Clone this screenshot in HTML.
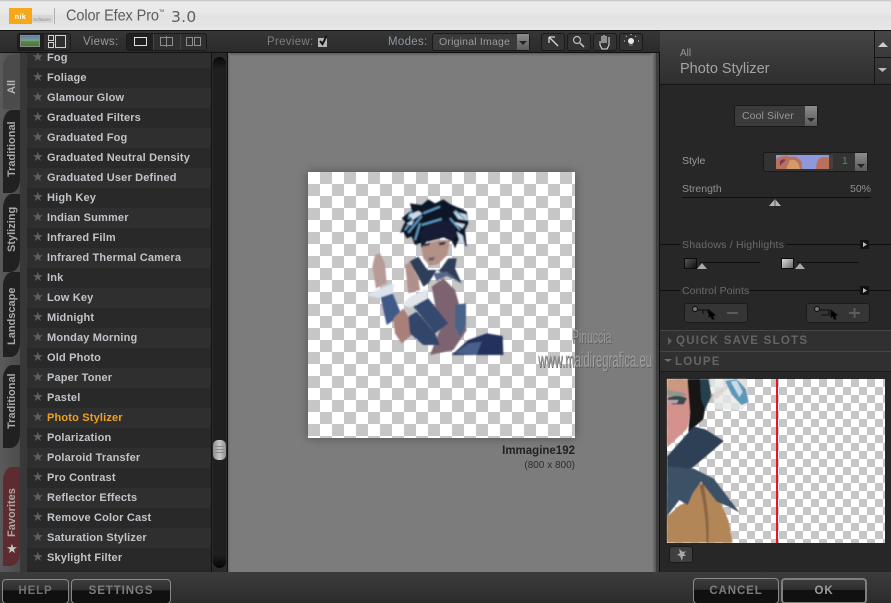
<!DOCTYPE html>
<html><head><meta charset="utf-8"><style>
html,body{margin:0;padding:0;background:#2a2a2a}
#p{position:relative;width:891px;height:603px;overflow:hidden;background:#2a2a2a;font-family:"Liberation Sans",sans-serif}
#p div,#p span.a{position:absolute}
.row{left:27px;width:184px;height:20px}
.row b{position:absolute;left:20px;top:3px;font:bold 11px/14px "Liberation Sans",sans-serif;color:#c0c4c8;white-space:nowrap;letter-spacing:.17px}
.row i{position:absolute;left:5px;top:2px;font:normal 13px/16px "DejaVu Sans",sans-serif;color:#5f5f5f}
.tab{left:3px;width:17px;border-radius:9px 0 9px 0/14px 0 14px 0;background:#212121}
.tl{left:4px;width:17px;font:bold 11px/17px "Liberation Sans",sans-serif;color:#a9a9a9;writing-mode:vertical-rl;transform:rotate(180deg);text-align:center}
.btn{border:1px solid #8a8a8a;border-radius:4px;background:linear-gradient(#3d3d3d 0,#2e2e2e 44%,#0f0f0f 46%,#111 100%);text-align:center;font:bold 11.5px/23px "Liberation Sans",sans-serif;color:#7f7f7f;letter-spacing:.9px;box-sizing:border-box;height:25px}
.t{white-space:nowrap}
.chk{background-color:#fff;background-image:linear-gradient(45deg,#c6c6c6 25%,transparent 25%,transparent 75%,#c6c6c6 75%),linear-gradient(45deg,#c6c6c6 25%,transparent 25%,transparent 75%,#c6c6c6 75%)}
.tb{background:#2f2f2f;border:1px solid #1a1a1a;border-radius:3px;box-sizing:border-box}
.dd{background:#3a3a3a;border-radius:3px;border:1px solid #191919;box-sizing:border-box}
.ln{height:1px;background:#0e0e0e}
</style></head><body><div id="p">

<!-- title bar -->
<div style="left:0;top:0;width:891px;height:30px;background:linear-gradient(#bdbdbd 0,#d6d6d6 1px,#ececec 2px,#e8e8e8 12px,#e1e1e1 16px,#e6e6e6 30px)"></div>
<div style="left:9px;top:8px;width:23px;height:16px;background:#f6a81c"></div>
<div class="t" style="left:10px;top:13px;width:21px;font:bold 7px/9px 'Liberation Sans',sans-serif;color:#fff;text-align:center;letter-spacing:.5px">nik</div>
<div style="left:32px;top:15px;width:21px;height:8px;background:#d6d6d6"></div>
<div class="t" style="left:33px;top:16px;font:4.5px/7px 'Liberation Sans',sans-serif;color:#8d8d8d">Software</div>
<div style="left:54px;top:8px;width:1px;height:16px;background:#b0b0b0"></div>
<div class="t" style="left:66px;top:7px;font:14.5px/18px 'Liberation Sans',sans-serif;color:#5d5d5d;letter-spacing:-.1px;transform:scaleY(1.08);transform-origin:0 50%">Color Efex Pro<sup style="font-size:6px;line-height:0">™</sup></div>
<div class="t" style="left:171px;top:8px;font:15.5px/18px 'DejaVu Sans',sans-serif;color:#5d5d5d;letter-spacing:.3px">3.0</div>

<!-- toolbar -->
<div style="left:0;top:30px;width:891px;height:1px;background:#111"></div>
<div style="left:0;top:31px;width:891px;height:22px;background:linear-gradient(#363636,#2a2a2a)"></div>
<div style="left:0;top:52px;width:660px;height:1px;background:#111"></div>
<div class="tb" style="left:17px;top:33px;width:54px;height:18px"></div>
<div style="left:18px;top:34px;width:26px;height:16px;background:#1f1f1f"></div>
<div style="left:21px;top:36px;width:18px;height:10px;background:linear-gradient(#5e7fa8 0,#7f9c8c 45%,#4f8a3c 55%,#4a7a38 100%);outline:1px solid #888"></div>
<svg class="a" style="position:absolute;left:47px;top:35px" width="20" height="13"><path d="M1.5 .5h5v5h-5zM1.5 7.5h5v5h-5zM8.5 .5h10v12h-10z" fill="none" stroke="#d0d0d0"/></svg>
<div class="t" style="left:83px;top:35px;font:11.5px/14px 'Liberation Sans',sans-serif;color:#9a9a9a;letter-spacing:.3px">Views:</div>
<div class="tb" style="left:126px;top:33px;width:81px;height:18px"></div>
<div style="left:127px;top:34px;width:26px;height:16px;background:#202020"></div>
<svg style="position:absolute;left:127px;top:34px" width="80" height="16"><path d="M7.5 3.5h12v8h-12z" fill="none" stroke="#e2e2e2"/><path d="M33.5 3.5h12v8h-12zM39.5 2v11" fill="none" stroke="#8d8d8d"/><path d="M26.5 0v16M53.5 0v16" stroke="#444"/><path d="M59.5 3.5h6v8h-6zM67.5 3.5h6v8h-6z" fill="none" stroke="#8d8d8d"/></svg>
<div class="t" style="left:267px;top:35px;font:11.5px/14px 'Liberation Sans',sans-serif;color:#7e7e7e;letter-spacing:.3px">Preview:</div>
<div style="left:318px;top:38px;width:9px;height:9px;background:#b5b5b5"></div>
<svg style="position:absolute;left:317px;top:35px" width="12" height="12"><path d="M3 6l2.5 3L9.5 1" fill="none" stroke="#111" stroke-width="2"/></svg>
<div class="t" style="left:388px;top:35px;font:11.5px/14px 'Liberation Sans',sans-serif;color:#8f96a0;letter-spacing:.3px">Modes:</div>
<div class="dd" style="left:432px;top:33px;width:98px;height:18px"></div>
<div class="t" style="left:439px;top:35px;font:10.5px/14px 'Liberation Sans',sans-serif;color:#9a9a9a;letter-spacing:.2px">Original Image</div>
<div style="left:517px;top:34px;width:12px;height:16px;background:linear-gradient(#8c8c8c,#5c5c5c)"></div>
<svg style="position:absolute;left:518px;top:40px" width="10" height="6"><path d="M1 1h8L5 5z" fill="#242424"/></svg>
<div class="tb" style="left:541px;top:33px;width:24px;height:18px;background:#333"></div>
<div class="tb" style="left:567px;top:33px;width:24px;height:18px;background:#333"></div>
<div class="tb" style="left:593px;top:33px;width:24px;height:18px;background:#333"></div>
<div class="tb" style="left:619px;top:33px;width:24px;height:18px;background:#333"></div>
<svg style="position:absolute;left:541px;top:33px" width="104" height="18" fill="none" stroke="#d8d8d8">
<path d="M8 4v6M8 4h6M8 4l9 9" stroke-width="1.3"/>
<circle cx="36" cy="7" r="3.5" stroke="#bbb" stroke-width="1.2"/><path d="M39 10l4 4" stroke="#bbb" stroke-width="1.6"/>
<path d="M59 8v4l2 4h5l2-4V4M61 10V3M63 10V2M65 10V3" stroke-width="1.1"/>
<circle cx="90" cy="8" r="3" fill="#e8e8e8" stroke="none"/><path d="M88.500 12h3M90 1v2M84 8h-2M98 8h-2M85 3l1 1M95 3l-1 1" stroke-dasharray="1 1"/>
</svg>

<!-- left tabs column -->
<div style="left:0;top:53px;width:20px;height:519px;background:linear-gradient(90deg,#5a5a5a,#4c4c4c)"></div>
<div style="left:20px;top:53px;width:7px;height:519px;background:#383838"></div>
<div class="tab" style="top:55px;height:54px;background:#4b4b4b;border-radius:9px 0 9px 0/12px 0 12px 0"></div>
<div class="tab" style="top:110px;height:83px"></div>
<div class="tab" style="top:194px;height:78px"></div>
<div class="tab" style="top:272px;height:85px"></div>
<div class="tab" style="top:365px;height:83px"></div>
<div class="tab" style="top:467px;height:99px;background:#5d2c31"></div>
<div class="tl" style="top:75px;height:24px;color:#b6b6b6">All</div>
<div class="tl" style="top:120px;height:58px">Traditional</div>
<div class="tl" style="top:206px;height:46px">Stylizing</div>
<div class="tl" style="top:286px;height:60px">Landscape</div>
<div class="tl" style="top:372px;height:58px">Traditional</div>
<div class="tl" style="top:489px;height:48px">Favorites</div>
<div class="t" style="left:4px;top:542px;width:16px;text-align:center;font:13px/16px 'DejaVu Sans',sans-serif;color:#c8c8c8">★</div>

<!-- list -->
<div style="left:27px;top:53px;width:184px;height:519px;background:#272727;overflow:hidden">
<div class="row" style="left:0;top:-5px;background:#2f2f2f"><i>★</i><b>Fog</b></div>
<div class="row" style="left:0;top:15px;background:#292929"><i>★</i><b>Foliage</b></div>
<div class="row" style="left:0;top:35px;background:#2f2f2f"><i>★</i><b>Glamour Glow</b></div>
<div class="row" style="left:0;top:55px;background:#292929"><i>★</i><b>Graduated Filters</b></div>
<div class="row" style="left:0;top:75px;background:#2f2f2f"><i>★</i><b>Graduated Fog</b></div>
<div class="row" style="left:0;top:95px;background:#292929"><i>★</i><b>Graduated Neutral Density</b></div>
<div class="row" style="left:0;top:115px;background:#2f2f2f"><i>★</i><b>Graduated User Defined</b></div>
<div class="row" style="left:0;top:135px;background:#292929"><i>★</i><b>High Key</b></div>
<div class="row" style="left:0;top:155px;background:#2f2f2f"><i>★</i><b>Indian Summer</b></div>
<div class="row" style="left:0;top:175px;background:#292929"><i>★</i><b>Infrared Film</b></div>
<div class="row" style="left:0;top:195px;background:#2f2f2f"><i>★</i><b>Infrared Thermal Camera</b></div>
<div class="row" style="left:0;top:215px;background:#292929"><i>★</i><b>Ink</b></div>
<div class="row" style="left:0;top:235px;background:#2f2f2f"><i>★</i><b>Low Key</b></div>
<div class="row" style="left:0;top:255px;background:#292929"><i>★</i><b>Midnight</b></div>
<div class="row" style="left:0;top:275px;background:#2f2f2f"><i>★</i><b>Monday Morning</b></div>
<div class="row" style="left:0;top:295px;background:#292929"><i>★</i><b>Old Photo</b></div>
<div class="row" style="left:0;top:315px;background:#2f2f2f"><i>★</i><b>Paper Toner</b></div>
<div class="row" style="left:0;top:335px;background:#292929"><i>★</i><b>Pastel</b></div>
<div class="row" style="left:0;top:355px;background:#2f2f2f"><i>★</i><b style="color:#f0a020">Photo Stylizer</b></div>
<div class="row" style="left:0;top:375px;background:#292929"><i>★</i><b>Polarization</b></div>
<div class="row" style="left:0;top:395px;background:#2f2f2f"><i>★</i><b>Polaroid Transfer</b></div>
<div class="row" style="left:0;top:415px;background:#292929"><i>★</i><b>Pro Contrast</b></div>
<div class="row" style="left:0;top:435px;background:#2f2f2f"><i>★</i><b>Reflector Effects</b></div>
<div class="row" style="left:0;top:455px;background:#292929"><i>★</i><b>Remove Color Cast</b></div>
<div class="row" style="left:0;top:475px;background:#2f2f2f"><i>★</i><b>Saturation Stylizer</b></div>
<div class="row" style="left:0;top:495px;background:#292929"><i>★</i><b>Skylight Filter</b></div>
</div>

<!-- scrollbar -->
<div style="left:211px;top:53px;width:17px;height:519px;background:#2a2a2a;border-left:1px solid #111;border-right:1px solid #111;box-sizing:border-box"></div>
<div style="left:213px;top:57px;width:13px;height:511px;background:linear-gradient(#080808 0,#1f1f1f 12px,#1f1f1f 498px,#050505 100%);border-radius:7px"></div>
<div style="left:213px;top:440px;width:13px;height:20px;background:linear-gradient(90deg,#8e8e8e,#c8c8c8,#8e8e8e);border-radius:5px"></div>
<svg style="position:absolute;left:215px;top:446px" width="9" height="8"><path d="M0 .5h9M0 3.500h9M0 6.500h9" stroke="#8a8a8a"/></svg>

<!-- canvas -->
<div style="left:228px;top:53px;width:427px;height:519px;background:#7c7c7c"></div>
<div style="left:228px;top:53px;width:427px;height:3px;background:linear-gradient(#5a5a5a,#7c7c7c)"></div>
<div style="left:228px;top:53px;width:2px;height:519px;background:linear-gradient(90deg,#666,#7c7c7c)"></div>
<div style="left:652px;top:53px;width:4px;height:519px;background:linear-gradient(90deg,#7c7c7c,#555)"></div>
<div style="left:656px;top:53px;width:3px;height:519px;background:#3e3e3e"></div>
<div style="left:659px;top:53px;width:1px;height:519px;background:#0f0f0f"></div>

<!-- image -->
<div class="chk" style="left:308px;top:172px;width:267px;height:266px;background-size:24px 24px;background-position:0 0,12px 12px;box-shadow:0 0 9px rgba(0,0,0,.35)"></div>
<svg style="position:absolute;left:340px;top:190px" width="180" height="180" viewBox="0 0 540 540">
<defs><filter id="bl" x="-5%" y="-5%" width="110%" height="110%"><feGaussianBlur stdDeviation="2"/></filter></defs>
<g filter="url(#bl)">
<path d="M275 290l35-25 35 35 20 70 15 50-40 60-70 15 30-75z" fill="#7d6470"/>
<path d="M335 495l50-45 55-20 48 8 2 57z" fill="#23335c"/>
<path d="M345 490l40-30 40-5-15 40z" fill="#4a5f8c"/>
<path d="M208 215l27-15 27 40 38 0 25-35 25 0-5 30 20 45-45-25-30-15-25 40-15 10-15-30z" fill="#2d3c58"/>
<path d="M280 250l40-5 45 35-45-22-30 15z" fill="#56698a"/>
<path d="M180 130l15-35-10-10 30-25-5-20 35 5 20-17 20 12 25-12 20 14 30 13 20 10 5 35-10 20 5 50-25-20-10 25-10-25-15-10-80 20-15 5-10-25-15 5-10-20z" fill="#0f1628"/>
<path d="M243 165l57-15 30 0-8 45-27 27-25 6-20-23z" fill="#b49186"/>
<path d="M250 163l20-5-2 8-16 3zM296 158l22-3-4 9-16 2z" fill="#3a3346"/>
<path d="M264 204q12-2 22-3l-7 11h-11z" fill="#6b5a70"/>
<path d="M238 130l40-42 60 6 12 40-15 20-30-15-40 10-20 25z" fill="#141d34"/>
<path d="M195 120l28-40M205 128l40-50M225 150l15-50M245 105l60-18M300 50l-50 20M215 62l-10 25" stroke="#5d97c0" stroke-width="6" fill="none"/>
<path d="M205 75l30-12 12 8-28 18zM200 100l22-8-8 14zM340 65l38 8 5 18-28-4zM335 95l40 8-8 12zM350 125l18 12 6 28-14-8z" fill="#c9dbe9"/>
<path d="M345 62l30 25M330 85l30 35" stroke="#6ca4c8" stroke-width="5" fill="none"/>
<path d="M97 230l8-35 15-5 15 30 5 60-32 15z" fill="#b89b97"/>
<path d="M195 225l15-10 25 50 5 35-35 10-5-45z" fill="#b0908a"/>
<path d="M78 315l32-15 50-20 0 30-40 15z" fill="#dde3ec"/>
<path d="M122 322l36-12 27 65-45 30z" fill="#3f5a88"/>
<path d="M160 385l30-30 15 25 10 55-30 25-20-30z" fill="#a98079"/>
<path d="M205 380l25-15 55 65 15 35h-50l-40-35z" fill="#30446a"/>
<path d="M220 350l45-25 60 75-40 30z" fill="#35496e"/>
<path d="M185 345l25-25 55-25-5 30-50 27z" fill="#e2e6ec"/>
<path d="M345 345l33-5 0 65-18 35-15-30z" fill="#4a6288"/>
</g>
</svg>
<div class="t" style="left:470px;top:445px;width:105px;text-align:right;font:bold 11.5px/13px 'Liberation Sans',sans-serif;color:#222">Immagine192</div>
<div class="t" style="left:470px;top:460px;width:105px;text-align:right;font:10px/12px 'Liberation Sans',sans-serif;color:#2e2e2e">(800 x 800)</div>
<div class="t" style="left:572px;top:327px;font:18px/20px 'Liberation Sans',sans-serif;color:#9a9a9a;transform:scaleX(.58);transform-origin:0 0;text-shadow:1px 1px 0 #5a5a5a">Pinuccia</div>
<div class="t" style="left:538px;top:350px;font:21px/22px 'Liberation Sans',sans-serif;color:#a0a0a0;transform:scaleX(.54);transform-origin:0 0;text-shadow:1px 1px 0 #5a5a5a">www.maidiregrafica.eu</div>

<!-- right panel -->
<div style="left:660px;top:31px;width:231px;height:541px;background:#272727"></div>
<div style="left:660px;top:31px;width:231px;height:53px;background:linear-gradient(#454545,#2e2e2e)"></div>
<div style="left:660px;top:84px;width:231px;height:1px;background:#161616"></div>
<div style="left:874px;top:31px;width:1px;height:53px;background:#141414"></div>
<div style="left:875px;top:57px;width:16px;height:1px;background:#141414"></div>
<svg style="position:absolute;left:875px;top:31px" width="16" height="53"><path d="M3 16l5-5 5 5z" fill="#ccc"/><path d="M3 37h9l-4.500 4z" fill="#bbb"/></svg>
<div class="t" style="left:680px;top:48px;font:10px/12px 'Liberation Sans',sans-serif;color:#9a9a9a">All</div>
<div class="t" style="left:680px;top:60px;font:14.5px/18px 'Liberation Sans',sans-serif;color:#a3a3a3">Photo Stylizer</div>

<div class="dd" style="left:734px;top:105px;width:84px;height:22px;background:#3b3b3b"></div>
<div class="t" style="left:742px;top:109px;font:10.500px/14px 'Liberation Sans',sans-serif;color:#989898;letter-spacing:.1px">Cool Silver</div>
<div style="left:805px;top:106px;width:12px;height:20px;background:linear-gradient(#8c8c8c,#5a5a5a)"></div>
<svg style="position:absolute;left:806px;top:117px" width="10" height="6"><path d="M1 1h8L5 5z" fill="#242424"/></svg>
<div class="t" style="left:682px;top:154px;font:10.500px/14px 'Liberation Sans',sans-serif;color:#9b9b9b">Style</div>
<div class="dd" style="left:763px;top:152px;width:105px;height:20px;background:#333"></div>
<div style="left:776px;top:155px;width:57px;height:14px;background:#8a90d0"></div>
<svg style="position:absolute;left:776px;top:155px" width="57" height="14"><path d="M0 0h57v14H0z" fill="#8f98d8"/><path d="M0 14V4q8-5 14-2 8-2 12 6v6zM40 14q0-12 8-12 7 0 9 4v8z" fill="#b8705f"/><path d="M14 5q8-2 10 9H10z" fill="#d39a6a"/><path d="M4 6q3-3 6-1-4 3-6 6z" fill="#7a3a50"/><path d="M53 0h4v14h-4z" fill="#4a4038"/></svg>
<div class="t" style="left:842px;top:154px;font:10.500px/14px 'Liberation Sans',sans-serif;color:#5e8a5a">1</div>
<div style="left:855px;top:153px;width:12px;height:18px;background:linear-gradient(#8c8c8c,#5a5a5a)"></div>
<svg style="position:absolute;left:856px;top:163px" width="10" height="6"><path d="M1 1h8L5 5z" fill="#242424"/></svg>
<div class="t" style="left:682px;top:182px;font:10.500px/14px 'Liberation Sans',sans-serif;color:#909090">Strength</div>
<div class="t" style="left:820px;top:182px;width:51px;text-align:right;font:10.500px/14px 'Liberation Sans',sans-serif;color:#909090">50%</div>
<div class="ln" style="left:682px;top:197px;width:189px"></div>
<svg style="position:absolute;left:768px;top:198px" width="14" height="9"><path d="M1 8l6-7 6 7z" fill="#b5b5b5"/><path d="M7 1v7" stroke="#555"/></svg>

<div class="ln" style="left:660px;top:244px;width:231px"></div>
<div style="left:680px;top:238px;width:106px;height:14px;background:#272727"></div>
<div class="t" style="left:682px;top:238px;font:10.500px/14px 'Liberation Sans',sans-serif;color:#6b6b6b;letter-spacing:.2px">Shadows / Highlights</div>
<div style="left:860px;top:240px;width:9px;height:9px;background:#111"></div>
<svg style="position:absolute;left:860px;top:240px" width="9" height="9"><path d="M3 2l4 2.500-4 2.500z" fill="#bbb"/></svg>
<div style="left:684px;top:258px;width:11px;height:9px;background:linear-gradient(135deg,#555,#111);border:1px solid #0c0c0c"></div>
<div class="ln" style="left:700px;top:262px;width:60px"></div>
<svg style="position:absolute;left:697px;top:262px" width="10" height="8"><path d="M0 7l5-6 5 6z" fill="#a8a8a8"/></svg>
<div style="left:781px;top:258px;width:11px;height:9px;background:linear-gradient(135deg,#ddd,#666);border:1px solid #0c0c0c"></div>
<div class="ln" style="left:797px;top:262px;width:62px"></div>
<svg style="position:absolute;left:795px;top:262px" width="10" height="8"><path d="M0 7l5-6 5 6z" fill="#a8a8a8"/></svg>

<div class="ln" style="left:660px;top:290px;width:231px"></div>
<div style="left:680px;top:284px;width:70px;height:14px;background:#272727"></div>
<div class="t" style="left:682px;top:284px;font:10.500px/14px 'Liberation Sans',sans-serif;color:#6b6b6b;letter-spacing:.1px">Control Points</div>
<div style="left:860px;top:286px;width:9px;height:9px;background:#111"></div>
<svg style="position:absolute;left:860px;top:286px" width="9" height="9"><path d="M3 2l4 2.500-4 2.500z" fill="#bbb"/></svg>
<div style="left:684px;top:303px;width:64px;height:20px;background:#353535;border:1px solid #1a1a1a;border-radius:3px;box-sizing:border-box"></div>
<div style="left:806px;top:303px;width:64px;height:20px;background:#353535;border:1px solid #1a1a1a;border-radius:3px;box-sizing:border-box"></div>
<svg style="position:absolute;left:684px;top:303px" width="190" height="20" fill="none" stroke="#0a0a0a">
<circle cx="11" cy="6" r="2.500" stroke="#0a0a0a" fill="#777"/><path d="M13 7h12M19 7v4M24 7v3"/><path d="M25 7l6 5-2 1 1 3-2 0-1-3-2 1z" fill="#000"/>
<path d="M43 10h11" stroke="#5c5c5c" stroke-width="2"/>
<circle cx="133" cy="6" r="2.500" stroke="#0a0a0a" fill="#777"/><path d="M135 7h10v5h-8"/><path d="M147 7l6 5-2 1 1 3-2 0-1-3-2 1z" fill="#000"/>
<path d="M165 10h11M170.500 5v10" stroke="#5c5c5c" stroke-width="2"/>
</svg>

<div style="left:660px;top:330px;width:231px;height:1px;background:#464646"></div>
<div style="left:660px;top:331px;width:231px;height:20px;background:#303030"></div>
<div style="left:660px;top:351px;width:231px;height:1px;background:#464646"></div>
<div style="left:660px;top:352px;width:231px;height:19px;background:#303030"></div>
<div style="left:660px;top:371px;width:231px;height:1px;background:#1a1a1a"></div>
<svg style="position:absolute;left:660px;top:333px" width="16" height="36"><path d="M8 4l4 4-4 4z" fill="#5e5e5e"/><path d="M4 26h8l-4 3z" fill="#6e6e6e"/></svg>
<div class="t" style="left:676px;top:334px;font:bold 11.5px/14px 'Liberation Sans',sans-serif;color:#646464;letter-spacing:1.25px">QUICK SAVE SLOTS</div>
<div class="t" style="left:675px;top:355px;font:bold 11.5px/14px 'Liberation Sans',sans-serif;color:#646464;letter-spacing:1.2px">LOUPE</div>

<!-- loupe -->
<div class="chk" style="left:667px;top:379px;width:218px;height:164px;background-size:16px 16px;background-position:0 0,8px 8px;overflow:hidden"></div>
<svg style="position:absolute;left:660px;top:370px" width="231" height="173" viewBox="0 0 693 519">
<defs><filter id="bl2" x="-5%" y="-5%" width="110%" height="110%"><feGaussianBlur stdDeviation="1.5"/></filter></defs>
<g filter="url(#bl2)">
<path d="M21 27h60l10 100-10 50-60 55z" fill="#d3928c"/>
<path d="M21 27h60l5 30-65-5z" fill="#c99a80"/>
<path d="M21 85q30-15 60 0l-10 18-35 0z" fill="#3a4a50"/>
<path d="M24 90h32l-6 10h-20z" fill="#b0a8b0"/>
<path d="M21 60l50 8 10 10-60 0z" fill="#8a9a88"/>
<path d="M82 27h50l8 60-10 60-45 40 5-60z" fill="#141414"/>
<path d="M120 27h25l10 50-20 40-12-30z" fill="#26404e"/>
<path d="M150 75l70-38-50 50z" fill="#b88878"/>
<path d="M150 27h110l5 70-20 25-80-5z" fill="#e6e8e8" opacity=".8"/>
<path d="M195 33l35-6 28 30 8 40-22 8-28-30z" fill="#5d97b8"/>
<path d="M212 35l18-4 18 35-10 15z" fill="#c8dce8"/>
<path d="M21 518V440l39-35 15-5 40-65 20 10 45 50 25 55 13 68z" fill="#b38659"/>
<path d="M130 340q20 100 15 178h-6q0-90-20-170z" fill="#8a6544"/>
<path d="M21 260l80-90 35 8 55 35-40 35-60 50-70-5z" fill="#2f4156"/>
<path d="M21 290l80 6 60 30 78 102-33-18-36-15-47-60-25 35-15 35-25-15-38 50z" fill="#3d5166"/>
</g>
</svg>
<div style="left:776px;top:379px;width:1.500px;height:164px;background:#f01020"></div>
<div style="left:669px;top:546px;width:24px;height:17px;background:#3f3f3f;border:1px solid #1a1a1a;border-radius:3px;box-sizing:border-box"></div>
<svg style="position:absolute;left:669px;top:546px" width="24" height="17"><path d="M10 3l4 3 3-1-2 3 2 2-3 0-1 5-2-5-3-1 3-2z" fill="#a8a8a8"/></svg>

<!-- bottom bar -->
<div style="left:0;top:572px;width:891px;height:31px;background:linear-gradient(#3c3c3c,#2c2c2c)"></div>
<div class="btn" style="left:2px;top:579px;width:67px;height:25px;color:#727272">HELP</div>
<div class="btn" style="left:71px;top:579px;width:100px;height:25px;color:#7d7d7d">SETTINGS</div>
<div class="btn" style="left:693px;top:578px;width:86px;height:26px;line-height:25px;color:#7d7d7d">CANCEL</div>
<div class="btn" style="left:781px;top:578px;width:86px;height:26px;border:2px solid #7f7f7f;color:#9c9c9c;line-height:23px">OK</div>
</div></body></html>
